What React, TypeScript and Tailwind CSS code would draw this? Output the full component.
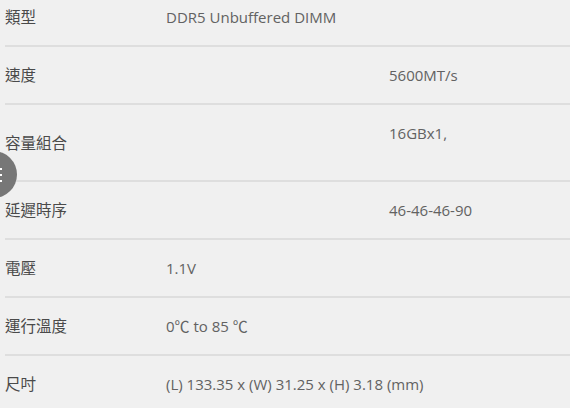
const rows: { label: string; value?: string[]; right?: string[] }[] = [
  { label: '類型', value: ['DDR5 Unbuffered DIMM'] },
  { label: '速度', right: ['5600MT/s'] },
  { label: '容量組合', right: ['16GBx1,', ''] },
  { label: '延遲時序', right: ['46-46-46-90'] },
  { label: '電壓', value: ['1.1V'] },
  { label: '運行溫度', value: ['0℃ to 85 ℃'] },
  { label: '尺吋', value: ['(L) 133.35 x (W) 31.25 x (H) 3.18 (mm)'] },
];

export default function App() {
  return (
    <div
      className="relative h-[408px] w-[570px] overflow-hidden bg-[#f0f0f0] text-[15px] leading-[20px]"
      style={{ fontFamily: "'Open Sans', 'Noto Sans CJK TC', sans-serif" }}
    >
      <div className="-mt-[11px] pl-[5px]">
        {rows.map((r) => (
          <div
            key={r.label}
            className="grid grid-cols-[161px_223px_1fr] items-center border-b-2 border-[#dedede] py-[18px]"
          >
            <div className="text-[15.5px] text-[#4a4a4a]">{r.label}</div>
            {r.right ? (
              <>
                <div />
                <div className="self-start text-[#626262]">
                  {r.right.map((v, i) => (v ? <div key={i}>{v}</div> : <div key={i} className="h-[19px]" />))}
                </div>
              </>
            ) : (
              <div className="col-span-2 self-start whitespace-nowrap text-[#626262]">
                {r.value?.map((v, i) => <div key={i}>{v}</div>)}
              </div>
            )}
          </div>
        ))}
      </div>

      {/* floating menu button, mostly off screen */}
      <div className="absolute left-[-30px] top-[151px] flex h-[47px] w-[47px] items-center justify-end rounded-full bg-[#777] pr-[15px]">
        <div className="flex flex-col gap-[4px]">
          <span className="block h-[2px] w-[12px] bg-white" />
          <span className="block h-[2px] w-[12px] bg-white" />
          <span className="block h-[2px] w-[12px] bg-white" />
        </div>
      </div>
    </div>
  );
}
